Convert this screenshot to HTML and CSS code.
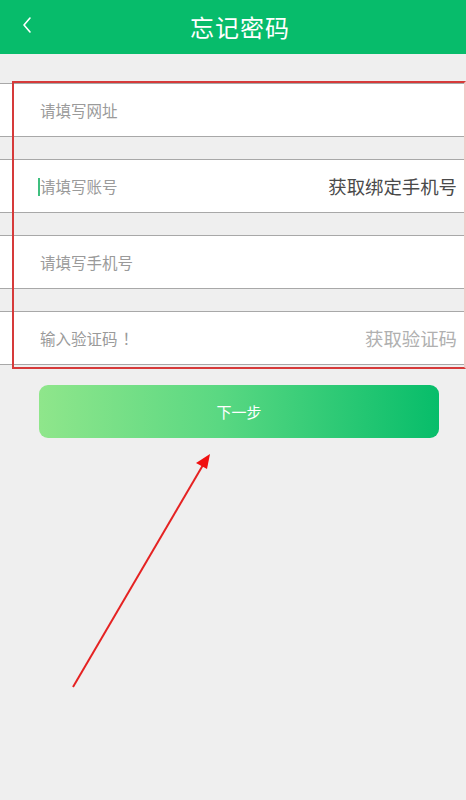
FILE: index.html
```html
<!DOCTYPE html>
<html lang="zh">
<head>
<meta charset="utf-8">
<title>忘记密码</title>
<link rel="stylesheet" href="styles.css">
</head>
<body>
<header class="topbar">
  <svg class="back" viewBox="0 0 12 18" width="12" height="18"><path d="M9 2 L3 9 L9 16" fill="none" stroke="#fff" stroke-width="1.6" stroke-linecap="round" stroke-linejoin="round"/></svg>
  <h1 class="title">忘记密码</h1>
</header>
<main class="form">
  <div class="row"><span class="ph">请填写网址</span></div>
  <div class="row"><span class="caret"></span><span class="ph">请填写账号</span><span class="action dark">获取绑定手机号</span></div>
  <div class="row"><span class="ph">请填写手机号</span></div>
  <div class="row"><span class="ph">输入验证码<span class="bang">！</span></span><span class="action light">获取验证码</span></div>
  <div class="mark-box"></div>
</main>
<button class="next">下一步</button>
<svg class="arrow" width="466" height="800" viewBox="0 0 466 800">
  <line x1="73" y1="687" x2="203" y2="465" stroke="#e52222" stroke-width="2"/>
  <polygon points="210,454 196,463 207,469" fill="#f01010"/>
</svg>
</body>
</html>
```

FILE: styles.css
```css
* { box-sizing: border-box; }
html, body { margin: 0; padding: 0; }
body {
  width: 466px;
  height: 800px;
  background: #efefef;
  font-family: "Noto Sans CJK SC", "Noto Sans", sans-serif;
  position: relative;
  overflow: hidden;
}
.topbar {
  height: 54px;
  background: #07bc6b;
  display: flex;
  align-items: center;
  justify-content: center;
  position: relative;
}
.back {
  position: absolute;
  left: 21px;
  top: 16px;
}
.title {
  margin: 0 0 2px 14px;
  color: #fff;
  font-size: 24px;
  font-weight: 400;
  letter-spacing: 1px;
}
.form {
  margin-top: 29px;
  display: flex;
  flex-direction: column;
  gap: 22px;
  position: relative;
}
.row {
  height: 54px;
  background: #fff;
  border-top: 1px solid #a8a8a8;
  border-bottom: 1px solid #a8a8a8;
  display: flex;
  align-items: center;
  padding: 0 9px 0 40px;
  position: relative;
}
.ph {
  color: #9a9a9a;
  font-size: 15.5px;
  flex: 1;
}
.bang { padding-left: 5px; }
.caret {
  position: absolute;
  left: 38px;
  top: 18px;
  width: 2px;
  height: 18px;
  background: #3fbf7f;
}
.action { font-size: 18.4px; }
.action.dark { color: #4a4a4a; }
.action.light { color: #b0b0b0; }
.mark-box {
  position: absolute;
  left: 12px;
  top: -2px;
  width: 454px;
  height: 288px;
  border: 2px solid #d63a3a;
  border-right-color: #f4c8c8;
  pointer-events: none;
}
.next {
  display: block;
  margin: 20px 0 0 39px;
  width: 400px;
  height: 53px;
  border: none;
  border-radius: 9px;
  background: linear-gradient(90deg, #8fe68b 0%, #5ad882 45%, #07bd6a 100%);
  color: #fff;
  font-family: "Noto Sans CJK SC", "Noto Sans", sans-serif;
  font-size: 15px;
}
.arrow {
  position: absolute;
  left: 0;
  top: 0;
  pointer-events: none;
}
```
